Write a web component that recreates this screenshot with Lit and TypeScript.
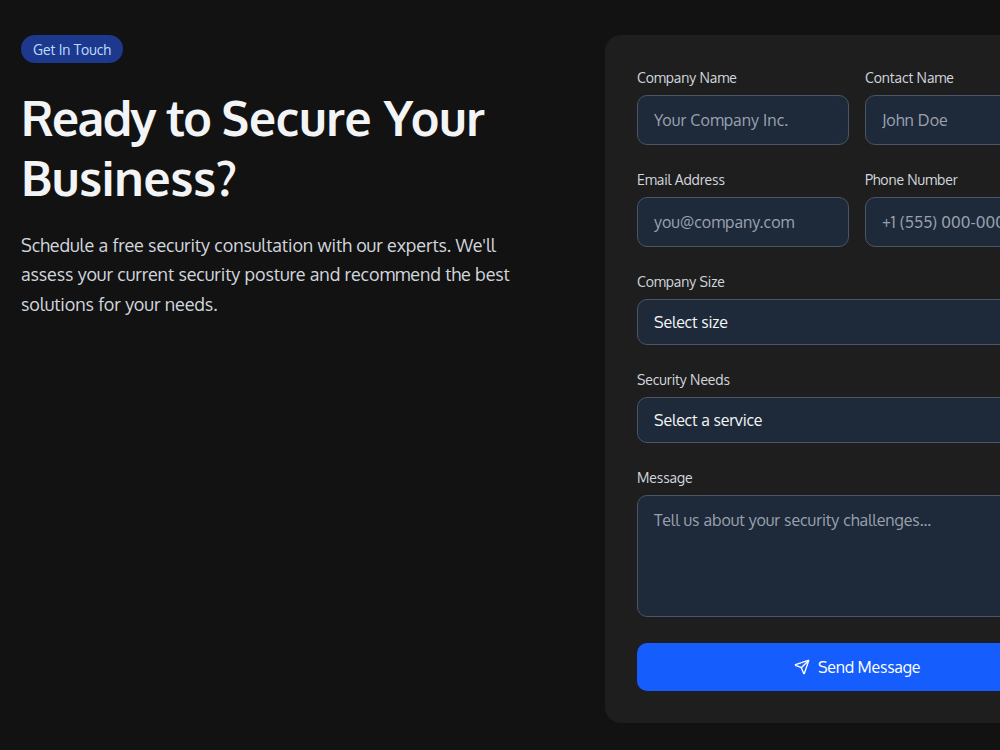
import { LitElement, html, css } from "lit";
import { customElement } from "lit/decorators.js";

@customElement("app-root")
class AppRoot extends LitElement {
  static styles = css`
    :host {
      display: block;
      width: 1000px;
      height: 750px;
      overflow: hidden;
      background: #121212;
      color: #f3f4f6;
      font-family: Oxygen, "Noto Sans", sans-serif;
      font-size: 16px;
      line-height: 24px;
    }
    *, *::before, *::after { box-sizing: border-box; }
    .section {
      display: grid;
      grid-template-columns: 504px 504px;
      gap: 80px;
      width: 1130px;
      padding: 35px 0 27px 21px;
      align-items: start;
    }
    .badge {
      display: block;
      width: 102px;
      height: 28px;
      padding: 5px 12px 3px;
      border-radius: 14px;
      background: #1c398e;
      color: #bedbff;
      font-size: 14px;
      line-height: 20px;
      letter-spacing: -0.05px;
      white-space: nowrap;
    }
    h2 {
      margin: 24px 0;
      font-size: 48px;
      font-weight: 700;
      line-height: 60px;
      letter-spacing: -0.25px;
      white-space: nowrap;
    }
    .tight { letter-spacing: -1.6px; }
    p {
      margin: 0;
      color: #d1d5dc;
      font-size: 18px;
      line-height: 29.25px;
      letter-spacing: -0.1px;
      white-space: nowrap;
    }
    .card {
      display: flex;
      flex-direction: column;
      gap: 24px;
      padding: 32px;
      border-radius: 16px;
      background: #1e1e1e;
    }
    .row { display: grid; grid-template-columns: 1fr 1fr; gap: 16px; }
    label {
      display: block;
      margin-bottom: 6px;
      color: #d1d5dc;
      font-size: 14px;
      line-height: 22px;
      letter-spacing: -0.1px;
    }
    .control {
      display: block;
      width: 100%;
      margin: 0;
      padding: 12px 16px;
      border: 1px solid #4a5565;
      border-radius: 10px;
      background: #1e2939;
      color: #f3f4f6;
      font: inherit;
      outline: none;
      appearance: none;
      resize: none;
    }
    .control::placeholder { color: #99a1af; opacity: 1; }
    input.control { height: 50px; letter-spacing: 0.05px; }
    select.control { height: 46px; padding: 10px 16px; letter-spacing: -0.18px; }
    textarea.control { height: 122px; margin-bottom: 2px; letter-spacing: -0.05px; }
    button {
      display: flex;
      align-items: center;
      justify-content: center;
      gap: 8px;
      height: 48px;
      padding: 0;
      border: 0;
      border-radius: 10px;
      background: #155dfc;
      color: #fff;
      font: inherit;
      letter-spacing: -0.25px;
    }
    svg { display: block; width: 16px; height: 16px; }
  `;

  field(label: string, placeholder: string) {
    return html`<div>
      <label>${label}</label>
      <input class="control" placeholder=${placeholder} />
    </div>`;
  }

  select(label: string, option: string) {
    return html`<div>
      <label>${label}</label>
      <select class="control"><option>${option}</option></select>
    </div>`;
  }

  render() {
    return html`<section class="section">
      <div>
        <span class="badge">Get In Touch</span>
        <h2><span class="tight">Ready to </span>Secure Your<br />Business?</h2>
        <p>Schedule a free security consultation with our experts. We'll<br />assess your current security posture and recommend the best<br />solutions for your needs.</p>
      </div>
      <form class="card">
        <div class="row">
          ${this.field("Company Name", "Your Company Inc.")}
          ${this.field("Contact Name", "John Doe")}
        </div>
        <div class="row">
          ${this.field("Email Address", "you@company.com")}
          ${this.field("Phone Number", "+1 (555) 000-0000")}
        </div>
        ${this.select("Company Size", "Select size")}
        ${this.select("Security Needs", "Select a service")}
        <div>
          <label>Message</label>
          <textarea class="control" placeholder="Tell us about your security challenges..."></textarea>
        </div>
        <button type="button">
          <svg viewBox="0 0 24 24" fill="none" stroke="currentColor" stroke-width="2" stroke-linecap="round" stroke-linejoin="round">
            <path d="M14.536 21.686a.5.5 0 0 0 .937-.024l6.5-19a.496.496 0 0 0-.635-.635l-19 6.5a.5.5 0 0 0-.024.937l7.93 3.18a2 2 0 0 1 1.112 1.11z" />
            <path d="m21.854 2.147-10.94 10.939" />
          </svg>
          <span>Send Message</span>
        </button>
      </form>
    </section>`;
  }
}
